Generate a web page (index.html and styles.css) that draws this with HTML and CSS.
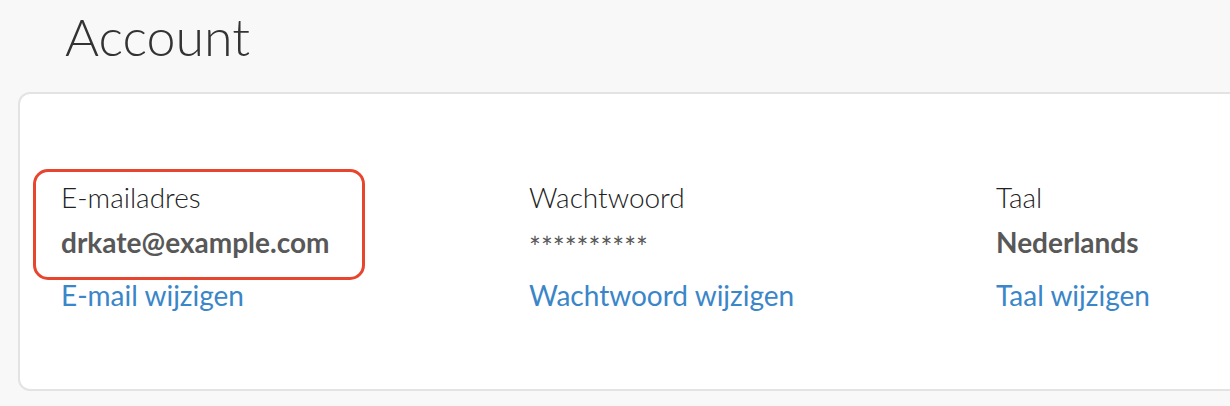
FILE: index.html
```html
<!DOCTYPE html>
<html lang="nl">
<head>
<meta charset="utf-8">
<title>Account</title>
<link rel="stylesheet" href="styles.css">
</head>
<body>
<main class="page">
<h1 class="title">Account</h1>
<section class="card">
  <div class="fields">
    <div class="field field-highlighted">
      <div class="label">E-mailadres</div>
      <div class="value">drkate@example.com</div>
      <a class="link" href="#">E-mail wijzigen</a>
      <span class="highlight"></span>
    </div>
    <div class="field">
      <div class="label">Wachtwoord</div>
      <div class="value value-masked">**********</div>
      <a class="link" href="#">Wachtwoord wijzigen</a>
    </div>
    <div class="field">
      <div class="label">Taal</div>
      <div class="value">Nederlands</div>
      <a class="link" href="#">Taal wijzigen</a>
    </div>
  </div>
</section>
</main>
</body>
</html>
```
FILE: styles.css
```css
html, body {
  margin: 0;
  padding: 0;
}
body {
  background: #f8f8f8;
  font-family: Lato, "Open Sans", sans-serif;
}
.page {
  width: 1230px;
  height: 406px;
  overflow: hidden;
}
.title {
  margin: 0;
  padding: 0 0 0 65px;
  height: 92px;
  box-sizing: border-box;
  font-weight: 300;
  font-size: 52px;
  line-height: 73px;
  color: #333;
}
.card {
  margin-left: 18px;
  margin-right: -40px;
  height: 299px;
  box-sizing: border-box;
  background: #fff;
  border: 2px solid #e3e3e3;
  border-radius: 12px;
}
.fields {
  display: grid;
  grid-template-columns: 468px 467px 300px;
  padding: 81px 0 0 41px;
}
.field {
  position: relative;
  display: flex;
  flex-direction: column;
  align-items: flex-start;
}
.label {
  font-weight: 300;
  font-size: 28px;
  line-height: 44px;
  color: #222;
}
.value {
  font-weight: 700;
  font-size: 28px;
  line-height: 46px;
  color: #585858;
}
.value-masked {
  font-weight: 400;
  height: 46px;
  padding-top: 5px;
  box-sizing: border-box;
}
.link {
  margin-top: 8px;
  font-weight: 400;
  font-size: 28px;
  line-height: 44px;
  color: #3a86c8;
  text-decoration: none;
}
.highlight {
  position: absolute;
  left: -28px;
  top: -6px;
  width: 332px;
  height: 111px;
  box-sizing: border-box;
  border: 3px solid #e8452e;
  border-radius: 15px;
}
```
